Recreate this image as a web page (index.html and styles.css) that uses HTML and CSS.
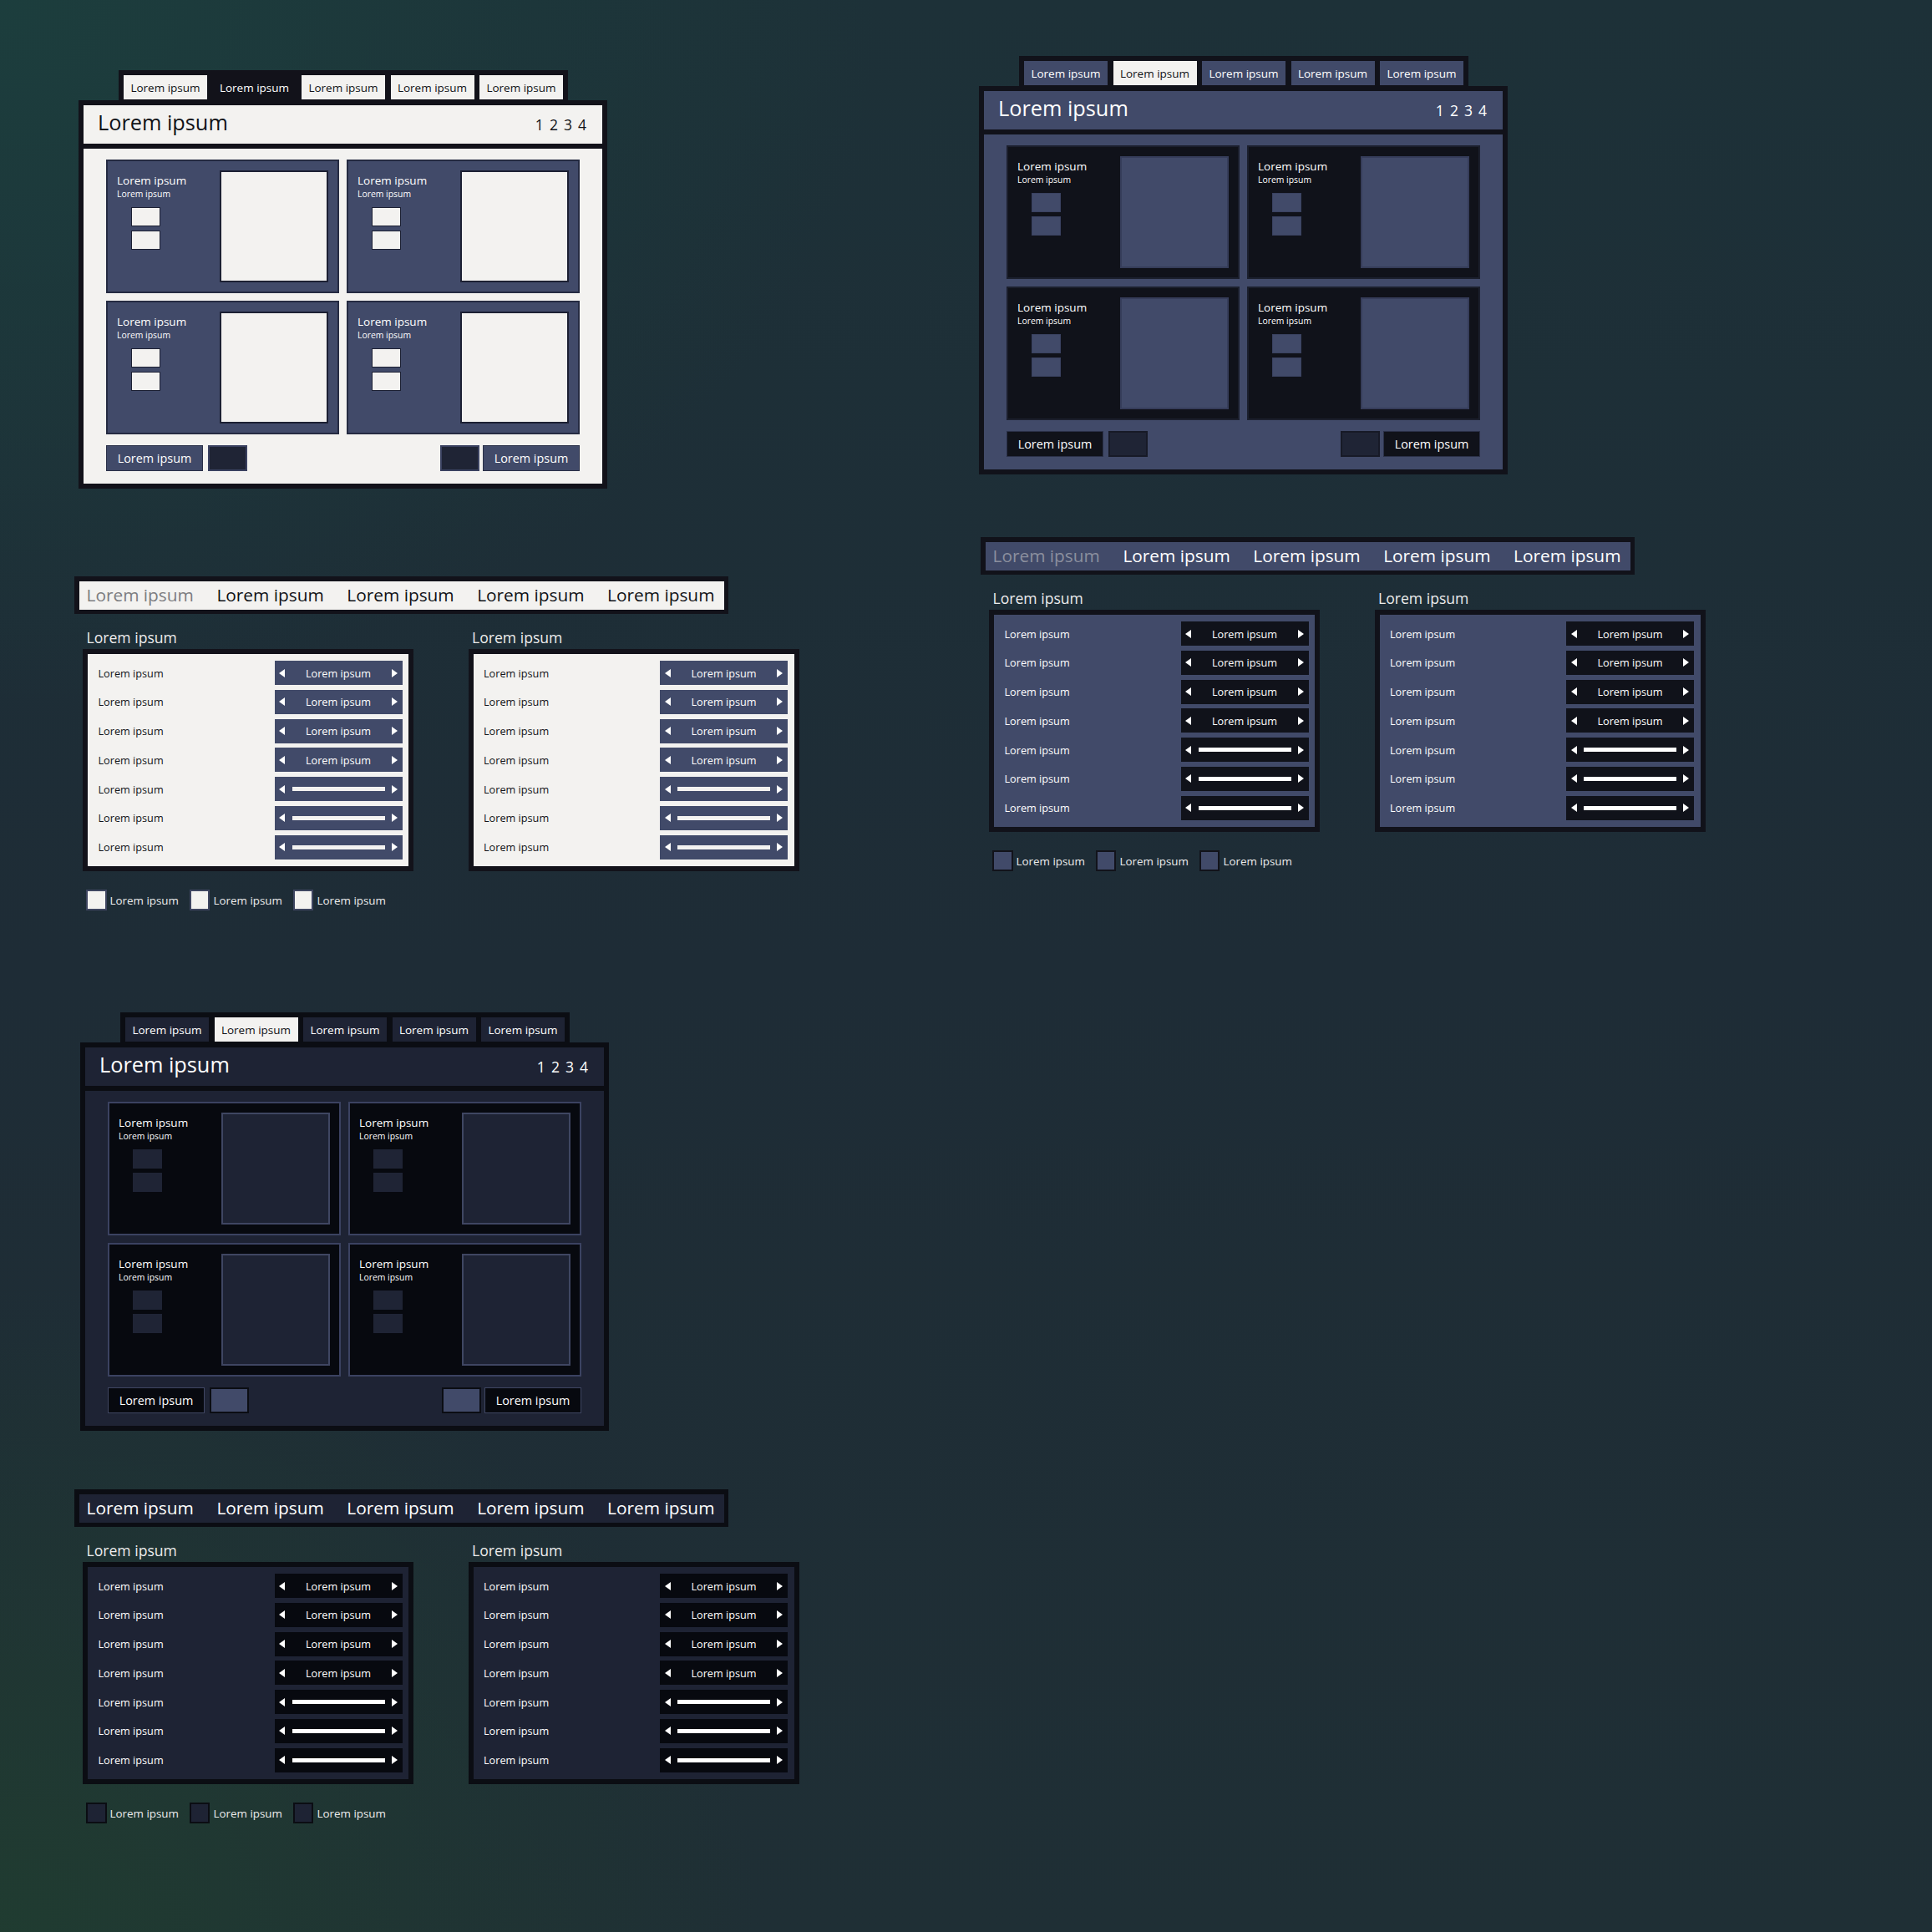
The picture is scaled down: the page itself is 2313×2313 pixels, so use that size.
FILE: index.html
```html
<!DOCTYPE html>
<html lang="en">
<head>
<meta charset="utf-8">
<title>UI kit</title>
<link rel="stylesheet" href="styles.css">
</head>
<body>
<div class="canvas">
  <div class="col col-left">

    <section class="window-block theme-light">
      <div class="tabstrip">
        <div class="tab">Lorem ipsum</div>
        <div class="tab active">Lorem ipsum</div>
        <div class="tab">Lorem ipsum</div>
        <div class="tab">Lorem ipsum</div>
        <div class="tab">Lorem ipsum</div>
      </div>
      <div class="window">
        <div class="win-head"><span class="win-title">Lorem ipsum</span><span class="win-pages">1 2 3 4</span></div>
        <div class="win-body">
          <div class="cards">
            <div class="card"><div class="card-text"><div class="card-title">Lorem ipsum</div><div class="card-sub">Lorem ipsum</div><div class="mini"></div><div class="mini"></div></div><div class="card-img"></div></div>
            <div class="card"><div class="card-text"><div class="card-title">Lorem ipsum</div><div class="card-sub">Lorem ipsum</div><div class="mini"></div><div class="mini"></div></div><div class="card-img"></div></div>
            <div class="card"><div class="card-text"><div class="card-title">Lorem ipsum</div><div class="card-sub">Lorem ipsum</div><div class="mini"></div><div class="mini"></div></div><div class="card-img"></div></div>
            <div class="card"><div class="card-text"><div class="card-title">Lorem ipsum</div><div class="card-sub">Lorem ipsum</div><div class="mini"></div><div class="mini"></div></div><div class="card-img"></div></div>
          </div>
          <div class="win-foot">
            <div class="foot-group"><div class="btn">Lorem ipsum</div><div class="sq"></div></div>
            <div class="foot-group foot-right"><div class="sq"></div><div class="btn">Lorem ipsum</div></div>
          </div>
        </div>
      </div>
    </section>

    <section class="settings theme-light s-first">
      <nav class="menubar">
        <span class="menu-item dim">Lorem ipsum</span>
        <span class="menu-item">Lorem ipsum</span>
        <span class="menu-item">Lorem ipsum</span>
        <span class="menu-item">Lorem ipsum</span>
        <span class="menu-item">Lorem ipsum</span>
      </nav>
      <div class="panels">
        <div class="panel-group">
          <div class="panel-label">Lorem ipsum</div>
          <div class="panel">
            <div class="row"><span class="row-label">Lorem ipsum</span><div class="ctrl"><i class="arr-l"></i><span class="ctrl-text">Lorem ipsum</span><i class="arr-r"></i></div></div>
            <div class="row"><span class="row-label">Lorem ipsum</span><div class="ctrl"><i class="arr-l"></i><span class="ctrl-text">Lorem ipsum</span><i class="arr-r"></i></div></div>
            <div class="row"><span class="row-label">Lorem ipsum</span><div class="ctrl"><i class="arr-l"></i><span class="ctrl-text">Lorem ipsum</span><i class="arr-r"></i></div></div>
            <div class="row"><span class="row-label">Lorem ipsum</span><div class="ctrl"><i class="arr-l"></i><span class="ctrl-text">Lorem ipsum</span><i class="arr-r"></i></div></div>
            <div class="row"><span class="row-label">Lorem ipsum</span><div class="ctrl"><i class="arr-l"></i><span class="bar"></span><i class="arr-r"></i></div></div>
            <div class="row"><span class="row-label">Lorem ipsum</span><div class="ctrl"><i class="arr-l"></i><span class="bar"></span><i class="arr-r"></i></div></div>
            <div class="row"><span class="row-label">Lorem ipsum</span><div class="ctrl"><i class="arr-l"></i><span class="bar"></span><i class="arr-r"></i></div></div>
          </div>
        </div>
        <div class="panel-group">
          <div class="panel-label">Lorem ipsum</div>
          <div class="panel">
            <div class="row"><span class="row-label">Lorem ipsum</span><div class="ctrl"><i class="arr-l"></i><span class="ctrl-text">Lorem ipsum</span><i class="arr-r"></i></div></div>
            <div class="row"><span class="row-label">Lorem ipsum</span><div class="ctrl"><i class="arr-l"></i><span class="ctrl-text">Lorem ipsum</span><i class="arr-r"></i></div></div>
            <div class="row"><span class="row-label">Lorem ipsum</span><div class="ctrl"><i class="arr-l"></i><span class="ctrl-text">Lorem ipsum</span><i class="arr-r"></i></div></div>
            <div class="row"><span class="row-label">Lorem ipsum</span><div class="ctrl"><i class="arr-l"></i><span class="ctrl-text">Lorem ipsum</span><i class="arr-r"></i></div></div>
            <div class="row"><span class="row-label">Lorem ipsum</span><div class="ctrl"><i class="arr-l"></i><span class="bar"></span><i class="arr-r"></i></div></div>
            <div class="row"><span class="row-label">Lorem ipsum</span><div class="ctrl"><i class="arr-l"></i><span class="bar"></span><i class="arr-r"></i></div></div>
            <div class="row"><span class="row-label">Lorem ipsum</span><div class="ctrl"><i class="arr-l"></i><span class="bar"></span><i class="arr-r"></i></div></div>
          </div>
        </div>
      </div>
      <div class="checks">
        <label class="check"><span class="box"></span>Lorem ipsum</label>
        <label class="check"><span class="box"></span>Lorem ipsum</label>
        <label class="check"><span class="box"></span>Lorem ipsum</label>
      </div>
    </section>

    <section class="window-block theme-dark w-third">
      <div class="tabstrip">
        <div class="tab">Lorem ipsum</div>
        <div class="tab active">Lorem ipsum</div>
        <div class="tab">Lorem ipsum</div>
        <div class="tab">Lorem ipsum</div>
        <div class="tab">Lorem ipsum</div>
      </div>
      <div class="window">
        <div class="win-head"><span class="win-title">Lorem ipsum</span><span class="win-pages">1 2 3 4</span></div>
        <div class="win-body">
          <div class="cards">
            <div class="card"><div class="card-text"><div class="card-title">Lorem ipsum</div><div class="card-sub">Lorem ipsum</div><div class="mini"></div><div class="mini"></div></div><div class="card-img"></div></div>
            <div class="card"><div class="card-text"><div class="card-title">Lorem ipsum</div><div class="card-sub">Lorem ipsum</div><div class="mini"></div><div class="mini"></div></div><div class="card-img"></div></div>
            <div class="card"><div class="card-text"><div class="card-title">Lorem ipsum</div><div class="card-sub">Lorem ipsum</div><div class="mini"></div><div class="mini"></div></div><div class="card-img"></div></div>
            <div class="card"><div class="card-text"><div class="card-title">Lorem ipsum</div><div class="card-sub">Lorem ipsum</div><div class="mini"></div><div class="mini"></div></div><div class="card-img"></div></div>
          </div>
          <div class="win-foot">
            <div class="foot-group"><div class="btn">Lorem ipsum</div><div class="sq"></div></div>
            <div class="foot-group foot-right"><div class="sq"></div><div class="btn">Lorem ipsum</div></div>
          </div>
        </div>
      </div>
    </section>

    <section class="settings theme-dark s-third">
      <nav class="menubar">
        <span class="menu-item dim">Lorem ipsum</span>
        <span class="menu-item">Lorem ipsum</span>
        <span class="menu-item">Lorem ipsum</span>
        <span class="menu-item">Lorem ipsum</span>
        <span class="menu-item">Lorem ipsum</span>
      </nav>
      <div class="panels">
        <div class="panel-group">
          <div class="panel-label">Lorem ipsum</div>
          <div class="panel">
            <div class="row"><span class="row-label">Lorem ipsum</span><div class="ctrl"><i class="arr-l"></i><span class="ctrl-text">Lorem ipsum</span><i class="arr-r"></i></div></div>
            <div class="row"><span class="row-label">Lorem ipsum</span><div class="ctrl"><i class="arr-l"></i><span class="ctrl-text">Lorem ipsum</span><i class="arr-r"></i></div></div>
            <div class="row"><span class="row-label">Lorem ipsum</span><div class="ctrl"><i class="arr-l"></i><span class="ctrl-text">Lorem ipsum</span><i class="arr-r"></i></div></div>
            <div class="row"><span class="row-label">Lorem ipsum</span><div class="ctrl"><i class="arr-l"></i><span class="ctrl-text">Lorem ipsum</span><i class="arr-r"></i></div></div>
            <div class="row"><span class="row-label">Lorem ipsum</span><div class="ctrl"><i class="arr-l"></i><span class="bar"></span><i class="arr-r"></i></div></div>
            <div class="row"><span class="row-label">Lorem ipsum</span><div class="ctrl"><i class="arr-l"></i><span class="bar"></span><i class="arr-r"></i></div></div>
            <div class="row"><span class="row-label">Lorem ipsum</span><div class="ctrl"><i class="arr-l"></i><span class="bar"></span><i class="arr-r"></i></div></div>
          </div>
        </div>
        <div class="panel-group">
          <div class="panel-label">Lorem ipsum</div>
          <div class="panel">
            <div class="row"><span class="row-label">Lorem ipsum</span><div class="ctrl"><i class="arr-l"></i><span class="ctrl-text">Lorem ipsum</span><i class="arr-r"></i></div></div>
            <div class="row"><span class="row-label">Lorem ipsum</span><div class="ctrl"><i class="arr-l"></i><span class="ctrl-text">Lorem ipsum</span><i class="arr-r"></i></div></div>
            <div class="row"><span class="row-label">Lorem ipsum</span><div class="ctrl"><i class="arr-l"></i><span class="ctrl-text">Lorem ipsum</span><i class="arr-r"></i></div></div>
            <div class="row"><span class="row-label">Lorem ipsum</span><div class="ctrl"><i class="arr-l"></i><span class="ctrl-text">Lorem ipsum</span><i class="arr-r"></i></div></div>
            <div class="row"><span class="row-label">Lorem ipsum</span><div class="ctrl"><i class="arr-l"></i><span class="bar"></span><i class="arr-r"></i></div></div>
            <div class="row"><span class="row-label">Lorem ipsum</span><div class="ctrl"><i class="arr-l"></i><span class="bar"></span><i class="arr-r"></i></div></div>
            <div class="row"><span class="row-label">Lorem ipsum</span><div class="ctrl"><i class="arr-l"></i><span class="bar"></span><i class="arr-r"></i></div></div>
          </div>
        </div>
      </div>
      <div class="checks">
        <label class="check"><span class="box"></span>Lorem ipsum</label>
        <label class="check"><span class="box"></span>Lorem ipsum</label>
        <label class="check"><span class="box"></span>Lorem ipsum</label>
      </div>
    </section>

  </div>

  <div class="col col-right">

    <section class="window-block theme-blue w-second">
      <div class="tabstrip">
        <div class="tab">Lorem ipsum</div>
        <div class="tab active">Lorem ipsum</div>
        <div class="tab">Lorem ipsum</div>
        <div class="tab">Lorem ipsum</div>
        <div class="tab">Lorem ipsum</div>
      </div>
      <div class="window">
        <div class="win-head"><span class="win-title">Lorem ipsum</span><span class="win-pages">1 2 3 4</span></div>
        <div class="win-body">
          <div class="cards">
            <div class="card"><div class="card-text"><div class="card-title">Lorem ipsum</div><div class="card-sub">Lorem ipsum</div><div class="mini"></div><div class="mini"></div></div><div class="card-img"></div></div>
            <div class="card"><div class="card-text"><div class="card-title">Lorem ipsum</div><div class="card-sub">Lorem ipsum</div><div class="mini"></div><div class="mini"></div></div><div class="card-img"></div></div>
            <div class="card"><div class="card-text"><div class="card-title">Lorem ipsum</div><div class="card-sub">Lorem ipsum</div><div class="mini"></div><div class="mini"></div></div><div class="card-img"></div></div>
            <div class="card"><div class="card-text"><div class="card-title">Lorem ipsum</div><div class="card-sub">Lorem ipsum</div><div class="mini"></div><div class="mini"></div></div><div class="card-img"></div></div>
          </div>
          <div class="win-foot">
            <div class="foot-group"><div class="btn">Lorem ipsum</div><div class="sq"></div></div>
            <div class="foot-group foot-right"><div class="sq"></div><div class="btn">Lorem ipsum</div></div>
          </div>
        </div>
      </div>
    </section>

    <section class="settings theme-blue s-second">
      <nav class="menubar">
        <span class="menu-item dim">Lorem ipsum</span>
        <span class="menu-item">Lorem ipsum</span>
        <span class="menu-item">Lorem ipsum</span>
        <span class="menu-item">Lorem ipsum</span>
        <span class="menu-item">Lorem ipsum</span>
      </nav>
      <div class="panels">
        <div class="panel-group">
          <div class="panel-label">Lorem ipsum</div>
          <div class="panel">
            <div class="row"><span class="row-label">Lorem ipsum</span><div class="ctrl"><i class="arr-l"></i><span class="ctrl-text">Lorem ipsum</span><i class="arr-r"></i></div></div>
            <div class="row"><span class="row-label">Lorem ipsum</span><div class="ctrl"><i class="arr-l"></i><span class="ctrl-text">Lorem ipsum</span><i class="arr-r"></i></div></div>
            <div class="row"><span class="row-label">Lorem ipsum</span><div class="ctrl"><i class="arr-l"></i><span class="ctrl-text">Lorem ipsum</span><i class="arr-r"></i></div></div>
            <div class="row"><span class="row-label">Lorem ipsum</span><div class="ctrl"><i class="arr-l"></i><span class="ctrl-text">Lorem ipsum</span><i class="arr-r"></i></div></div>
            <div class="row"><span class="row-label">Lorem ipsum</span><div class="ctrl"><i class="arr-l"></i><span class="bar"></span><i class="arr-r"></i></div></div>
            <div class="row"><span class="row-label">Lorem ipsum</span><div class="ctrl"><i class="arr-l"></i><span class="bar"></span><i class="arr-r"></i></div></div>
            <div class="row"><span class="row-label">Lorem ipsum</span><div class="ctrl"><i class="arr-l"></i><span class="bar"></span><i class="arr-r"></i></div></div>
          </div>
        </div>
        <div class="panel-group">
          <div class="panel-label">Lorem ipsum</div>
          <div class="panel">
            <div class="row"><span class="row-label">Lorem ipsum</span><div class="ctrl"><i class="arr-l"></i><span class="ctrl-text">Lorem ipsum</span><i class="arr-r"></i></div></div>
            <div class="row"><span class="row-label">Lorem ipsum</span><div class="ctrl"><i class="arr-l"></i><span class="ctrl-text">Lorem ipsum</span><i class="arr-r"></i></div></div>
            <div class="row"><span class="row-label">Lorem ipsum</span><div class="ctrl"><i class="arr-l"></i><span class="ctrl-text">Lorem ipsum</span><i class="arr-r"></i></div></div>
            <div class="row"><span class="row-label">Lorem ipsum</span><div class="ctrl"><i class="arr-l"></i><span class="ctrl-text">Lorem ipsum</span><i class="arr-r"></i></div></div>
            <div class="row"><span class="row-label">Lorem ipsum</span><div class="ctrl"><i class="arr-l"></i><span class="bar"></span><i class="arr-r"></i></div></div>
            <div class="row"><span class="row-label">Lorem ipsum</span><div class="ctrl"><i class="arr-l"></i><span class="bar"></span><i class="arr-r"></i></div></div>
            <div class="row"><span class="row-label">Lorem ipsum</span><div class="ctrl"><i class="arr-l"></i><span class="bar"></span><i class="arr-r"></i></div></div>
          </div>
        </div>
      </div>
      <div class="checks">
        <label class="check"><span class="box"></span>Lorem ipsum</label>
        <label class="check"><span class="box"></span>Lorem ipsum</label>
        <label class="check"><span class="box"></span>Lorem ipsum</label>
      </div>
    </section>

  </div>
</div>
</body>
</html>
```
FILE: styles.css
```css
* { box-sizing: border-box; margin: 0; padding: 0; }

html, body { width: 2313px; height: 2313px; }

body {
  overflow: hidden;
  font-family: "Open Sans", "Noto Sans", sans-serif;
  background-color: #1e2d36;
  background-image:
    radial-gradient(ellipse 1500px 1200px at 0% 0%, rgba(28, 64, 62, 0.85), rgba(28, 64, 62, 0) 70%),
    radial-gradient(ellipse 1300px 1100px at 0% 100%, rgba(32, 62, 48, 0.85), rgba(32, 62, 48, 0) 70%),
    linear-gradient(180deg, #1d3138 0%, #1e2c36 50%, #1f2f35 100%);
}

.canvas {
  display: grid;
  grid-template-columns: 1083px 1fr;
  padding-left: 89px;
  align-items: start;
}

.col { display: flex; flex-direction: column; align-items: flex-start; }
.col-left { padding-top: 84px; }
.col-right { padding-top: 67px; }

/* ---------- themes ---------- */
.theme-light {
  --frame: #12121a;
  --head-bg: #f3f2f0; --head-fg: #111217;
  --content-bg: #f3f2f0;
  --tab-bg: #f3f2f0; --tab-fg: #111217;
  --tab-active-bg: #12121a; --tab-active-fg: #ffffff;
  --card-bg: #414a69; --card-border: #252b42; --card-fg: #ffffff;
  --mini-bg: #f3f2f0; --mini-border: #1c2033;
  --img-bg: #f3f2f0; --img-border: #1c2033;
  --btn-bg: #414a69; --btn-border: #2a3048; --btn-fg: #ffffff;
  --sq-bg: #1f2435; --sq-border: #3a4160;
  --menu-bg: #f3f2f0; --menu-fg: #111217; --menu-dim: #7d7d80;
  --panel-bg: #f3f2f0; --label-fg: #111217;
  --ctrl-bg: #414a69; --ctrl-fg: #ffffff; --bar: #f3f2f0;
  --cb-bg: #f3f2f0; --cb-border: #3e4560;
}
.theme-blue {
  --frame: #11121a;
  --head-bg: #414a69; --head-fg: #ffffff;
  --content-bg: #414a69;
  --tab-bg: #414a69; --tab-fg: #ffffff;
  --tab-active-bg: #f3f2f0; --tab-active-fg: #111217;
  --card-bg: #10121a; --card-border: #1b1f2d; --card-fg: #ffffff;
  --mini-bg: #414a69; --mini-border: #3a4261;
  --img-bg: #414a69; --img-border: #363d5a;
  --btn-bg: #10121a; --btn-border: #2a3048; --btn-fg: #ffffff;
  --sq-bg: #1f2435; --sq-border: #171a27;
  --menu-bg: #414a69; --menu-fg: #ffffff; --menu-dim: #8b8f9e;
  --panel-bg: #414a69; --label-fg: #ffffff;
  --ctrl-bg: #10121a; --ctrl-fg: #ffffff; --bar: #ffffff;
  --cb-bg: #414a69; --cb-border: #12131b;
}
.theme-dark {
  --frame: #0b0d13;
  --head-bg: #1e2334; --head-fg: #ffffff;
  --content-bg: #1e2334;
  --tab-bg: #1e2334; --tab-fg: #ffffff;
  --tab-active-bg: #f3f2f0; --tab-active-fg: #111217;
  --card-bg: #07090f; --card-border: #3b4261; --card-fg: #ffffff;
  --mini-bg: #1f2435; --mini-border: #1f2435;
  --img-bg: #1e2334; --img-border: #3f4662;
  --btn-bg: #07090f; --btn-border: #3f4662; --btn-fg: #ffffff;
  --sq-bg: #414a69; --sq-border: #0b0d13;
  --menu-bg: #1e2334; --menu-fg: #ffffff; --menu-dim: #ffffff;
  --panel-bg: #1e2334; --label-fg: #ffffff;
  --ctrl-bg: #07090f; --ctrl-fg: #ffffff; --bar: #ffffff;
  --cb-bg: #1e2334; --cb-border: #0b0d13;
}

/* ---------- window ---------- */
.window-block {
  display: flex;
  flex-direction: column;
  align-items: flex-start;
  margin-left: 5px;
}
.w-second { margin-left: 0; }
.w-third { margin-top: 122px; margin-left: 7px; }

.tabstrip {
  margin-left: 48px;
  display: flex;
  gap: 6.5px;
  height: 36px;
  padding: 6px 6px 0;
  background: var(--frame);
}
.tab {
  width: 100px;
  height: 29px;
  display: flex;
  align-items: center;
  justify-content: center;
  font-size: 13.5px;
  background: var(--tab-bg);
  color: var(--tab-fg);
}
.tab.active { background: var(--tab-active-bg); color: var(--tab-active-fg); }

.window {
  width: 633px;
  height: 465px;
  border: 6px solid var(--frame);
  background: var(--frame);
  display: flex;
  flex-direction: column;
}
.win-head {
  height: 46px;
  flex: none;
  display: flex;
  align-items: baseline;
  justify-content: space-between;
  padding: 3px 19px 0 17px;
  background: var(--head-bg);
  color: var(--head-fg);
}
.win-title { font-size: 25.3px; line-height: 34.5px; }
.win-pages { font-size: 17.5px; word-spacing: 2.5px; }

.win-body {
  flex: 1;
  margin-top: 6px;
  padding: 13px 27px 15px;
  display: flex;
  flex-direction: column;
  justify-content: space-between;
  background: var(--content-bg);
}
.cards {
  display: grid;
  grid-template-columns: 1fr 1fr;
  gap: 9px;
}
.card {
  height: 160px;
  padding: 11px;
  display: flex;
  justify-content: space-between;
  border: 2px solid var(--card-border);
  background: var(--card-bg);
  color: var(--card-fg);
}
.card-text { display: flex; flex-direction: column; align-items: flex-start; }
.card-title { font-size: 13.5px; line-height: 18.4px; margin-top: 2.5px; }
.card-sub { font-size: 10.4px; line-height: 14.2px; margin-bottom: 8.5px; }
.mini {
  width: 35px;
  height: 23.5px;
  margin-left: 16.5px;
  margin-bottom: 4.5px;
  border: 1.5px solid var(--mini-border);
  background: var(--mini-bg);
}
.card-img {
  width: 130px;
  height: 134px;
  border: 2px solid var(--img-border);
  background: var(--img-bg);
}

.win-foot { display: flex; justify-content: space-between; height: 31px; }
.foot-group { display: flex; gap: 5.5px; }
.foot-right { gap: 4.5px; }
.btn {
  width: 116px;
  height: 31px;
  display: flex;
  align-items: center;
  justify-content: center;
  font-size: 14.4px;
  border: 1.5px solid var(--btn-border);
  background: var(--btn-bg);
  color: var(--btn-fg);
}
.sq {
  width: 47px;
  height: 31px;
  border: 2px solid var(--sq-border);
  background: var(--sq-bg);
}

/* ---------- settings ---------- */
.settings { display: flex; flex-direction: column; align-items: flex-start; }
.s-first { margin-top: 105px; }
.s-second { margin-top: 75px; margin-left: 2px; }
.s-third { margin-top: 70px; }

.menubar {
  width: 783px;
  height: 45px;
  display: flex;
  gap: 27.5px;
  padding: 2px 5px 3px 8.5px;
  border: solid var(--frame);
  border-width: 6px 5px 5px 6px;
  background: var(--menu-bg);
}
.menu-item { font-size: 20.85px; line-height: 28px; color: var(--menu-fg); white-space: nowrap; }
.menu-item.dim { color: var(--menu-dim); }

.panels { display: flex; gap: 65.5px; margin: 16px 0 0 10px; }
.panel-label {
  font-size: 17.6px;
  line-height: 24px;
  margin: 0 0 2px 4.5px;
  color: #ececec;
}
.panel {
  width: 396px;
  height: 266px;
  padding: 8px 7.5px 8px 12.5px;
  display: flex;
  flex-direction: column;
  gap: 5.75px;
  border: 6px solid var(--frame);
  background: var(--panel-bg);
}
.row { height: 29px; display: flex; align-items: center; justify-content: space-between; }
.row-label { font-size: 12.7px; color: var(--label-fg); }
.ctrl {
  width: 153px;
  height: 29px;
  padding: 0 5.6px;
  display: flex;
  align-items: center;
  justify-content: space-between;
  background: var(--ctrl-bg);
}
.ctrl-text { font-size: 12.7px; color: var(--ctrl-fg); }
.arr-l, .arr-r {
  width: 0;
  height: 0;
  border-top: 5px solid transparent;
  border-bottom: 5px solid transparent;
}
.arr-l { border-right: 7px solid #ffffff; }
.arr-r { border-left: 7px solid #ffffff; }
.bar { width: 111px; height: 5px; background: var(--bar); }

.checks { display: flex; gap: 13px; margin: 22px 0 0 14px; }
.check { display: flex; align-items: center; gap: 4px; font-size: 13.4px; color: #ececec; }
.box {
  width: 24.5px;
  height: 25px;
  border: 2px solid var(--cb-border);
  background: var(--cb-bg);
}
```
